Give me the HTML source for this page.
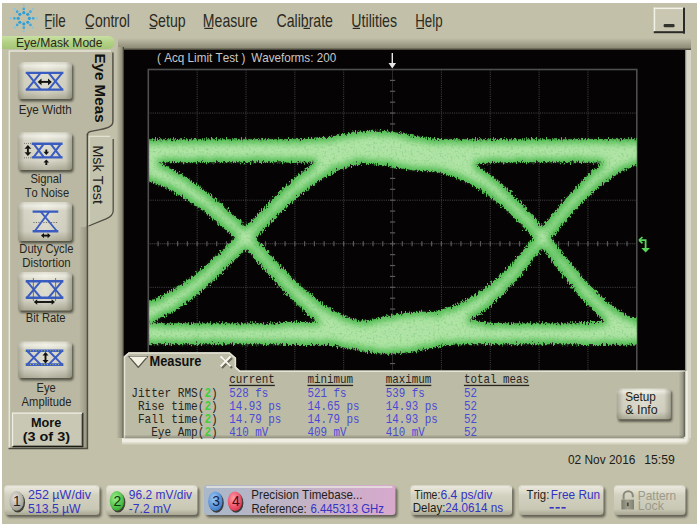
<!DOCTYPE html><html><head><meta charset="utf-8"><title>DCA Eye</title><style>html,body{margin:0;padding:0;background:#fff;width:700px;height:528px;overflow:hidden}svg{display:block}#w{width:700px;height:528px}text{font-kerning:none}</style></head><body><div id="w"><svg width="700" height="528" viewBox="0 0 700 528"><defs><linearGradient id="gTopSh" x1="0" y1="0" x2="0" y2="1"><stop offset="0" stop-color="#c2c0a9"/><stop offset="0.8" stop-color="#8f8c78"/><stop offset="1" stop-color="#3a392f"/></linearGradient><linearGradient id="gLeftSh" x1="0" y1="0" x2="1" y2="0"><stop offset="0" stop-color="#c2c0a9"/><stop offset="0.75" stop-color="#918e7b"/><stop offset="1" stop-color="#2e2d26"/></linearGradient><linearGradient id="gRtHl" x1="0" y1="0" x2="1" y2="0"><stop offset="0" stop-color="#2a2a24"/><stop offset="0.45" stop-color="#d8d8cc"/><stop offset="1" stop-color="#d8d7c8"/></linearGradient><linearGradient id="gBtHl" x1="0" y1="0" x2="0" y2="1"><stop offset="0" stop-color="#f1f0e5"/><stop offset="0.45" stop-color="#eeede2"/><stop offset="1" stop-color="#c2c0a9"/></linearGradient><radialGradient id="gCorn" cx="683.5" cy="438.3" r="7.5" gradientUnits="userSpaceOnUse"><stop offset="0" stop-color="#f1f0e5"/><stop offset="0.5" stop-color="#e6e5d9"/><stop offset="1" stop-color="#c2c0a9"/></radialGradient><clipPath id="cGrid"><rect x="149.10" y="69.50" width="487.70" height="348.50"/></clipPath><filter id="fEye" x="-2%" y="-5%" width="104%" height="110%" color-interpolation-filters="sRGB"><feTurbulence type="fractalNoise" baseFrequency="0.8 0.3" numOctaves="2" seed="5" result="n"/><feDisplacementMap in="SourceGraphic" in2="n" scale="8" xChannelSelector="R" yChannelSelector="G" result="d"/><feFlood flood-color="#4ebc50"/><feComposite in2="d" operator="in" result="base"/><feMorphology in="d" operator="erode" radius="3" result="er"/><feGaussianBlur in="er" stdDeviation="3.2" result="core"/><feFlood flood-color="#b0e4a6"/><feComposite in2="core" operator="in" result="coreC"/><feTurbulence type="fractalNoise" baseFrequency="0.45" numOctaves="2" seed="9" result="n2"/><feColorMatrix in="n2" type="matrix" values="0 0 0 0 0.36  0 0 0 0 0.72  0 0 0 0 0.34  0 0 0 -1.1 0.55" result="spk"/><feComposite in="spk" in2="d" operator="in" result="spkIn"/><feMerge result="m"><feMergeNode in="base"/><feMergeNode in="coreC"/><feMergeNode in="spkIn"/></feMerge><feGaussianBlur in="m" stdDeviation="0.7"/></filter><linearGradient id="gMpR" x1="0" y1="0" x2="1" y2="0"><stop offset="0" stop-color="#5a594d" stop-opacity="0"/><stop offset="0.6" stop-color="#5a594d" stop-opacity="0.35"/><stop offset="1" stop-color="#4a4940" stop-opacity="0.95"/></linearGradient><linearGradient id="gMpB" x1="0" y1="0" x2="0" y2="1"><stop offset="0" stop-color="#5a594d" stop-opacity="0"/><stop offset="1" stop-color="#5a594d" stop-opacity="0.45"/></linearGradient><filter id="fSh" x="-20%" y="-20%" width="140%" height="140%"><feGaussianBlur stdDeviation="1.3"/></filter><linearGradient id="gBtn" x1="0" y1="0" x2="0" y2="1"><stop offset="0" stop-color="#e8e7da"/><stop offset="0.12" stop-color="#d6d5c4"/><stop offset="1" stop-color="#c2c1ad"/></linearGradient><linearGradient id="gMode" x1="0" y1="0" x2="0" y2="1"><stop offset="0" stop-color="#c9e0a4"/><stop offset="0.5" stop-color="#b2d185"/><stop offset="1" stop-color="#a4c576"/></linearGradient><linearGradient id="gPanR" x1="0" y1="0" x2="1" y2="0"><stop offset="0" stop-color="#6a6956" stop-opacity="0"/><stop offset="1" stop-color="#6a6956" stop-opacity="0.45"/></linearGradient><linearGradient id="gIcoV" x1="0" y1="0" x2="0" y2="1"><stop offset="0" stop-color="#dcdbcc"/><stop offset="0.1" stop-color="#f3f2e8"/><stop offset="0.22" stop-color="#dddccd"/><stop offset="0.75" stop-color="#d6d5c6"/><stop offset="1" stop-color="#aeac98"/></linearGradient><linearGradient id="gIcoH" x1="0" y1="0" x2="1" y2="0"><stop offset="0" stop-color="#6e6d5a" stop-opacity="0.45"/><stop offset="0.12" stop-color="#6e6d5a" stop-opacity="0.08"/><stop offset="0.5" stop-color="#ffffff" stop-opacity="0.1"/><stop offset="0.88" stop-color="#6e6d5a" stop-opacity="0.08"/><stop offset="1" stop-color="#6e6d5a" stop-opacity="0.5"/></linearGradient><linearGradient id="gSt" x1="0" y1="0" x2="0" y2="1"><stop offset="0" stop-color="#d4d3c3"/><stop offset="0.12" stop-color="#e4e3d6"/><stop offset="0.35" stop-color="#d2d1c0"/><stop offset="0.8" stop-color="#c9c8b5"/><stop offset="1" stop-color="#a7a692"/></linearGradient><linearGradient id="gTb" x1="0" y1="0" x2="1" y2="0"><stop offset="0" stop-color="#a9b8c9"/><stop offset="0.5" stop-color="#c2b3c6"/><stop offset="1" stop-color="#d7a9cd"/></linearGradient><radialGradient id="gE1" cx="0.4" cy="0.35" r="0.7"><stop offset="0" stop-color="#e4e2dc"/><stop offset="1" stop-color="#9a978d"/></radialGradient><radialGradient id="gE2" cx="0.4" cy="0.35" r="0.7"><stop offset="0" stop-color="#9df08f"/><stop offset="1" stop-color="#2faa2c"/></radialGradient><radialGradient id="gE3" cx="0.4" cy="0.35" r="0.7"><stop offset="0" stop-color="#9cc8f4"/><stop offset="1" stop-color="#3a78c8"/></radialGradient><radialGradient id="gE4" cx="0.4" cy="0.35" r="0.7"><stop offset="0" stop-color="#ff9aa8"/><stop offset="1" stop-color="#e0304a"/></radialGradient><linearGradient id="gLk" x1="0" y1="0" x2="1" y2="0"><stop offset="0" stop-color="#7c7b6c"/><stop offset="0.5" stop-color="#a3a291"/><stop offset="1" stop-color="#808070"/></linearGradient></defs><g><rect x="0.00" y="0.00" width="700.00" height="528.00" fill="#ffffff" />
<rect x="2.00" y="3.00" width="695.00" height="521.00" fill="#c2c0a9" />
<circle cx="29.40" cy="18.30" r="1.60" fill="#2d9ed8"/>
<circle cx="33.20" cy="18.30" r="1.35" fill="#3aa8dc"/>
<circle cx="36.80" cy="18.30" r="1.00" fill="#7cc4e6"/>
<circle cx="27.76" cy="22.26" r="1.60" fill="#2d9ed8"/>
<circle cx="30.45" cy="24.95" r="1.35" fill="#3aa8dc"/>
<circle cx="32.99" cy="27.49" r="1.00" fill="#7cc4e6"/>
<circle cx="23.80" cy="23.90" r="1.60" fill="#2d9ed8"/>
<circle cx="23.80" cy="27.70" r="1.35" fill="#3aa8dc"/>
<circle cx="23.80" cy="31.30" r="1.00" fill="#7cc4e6"/>
<circle cx="19.84" cy="22.26" r="1.60" fill="#2d9ed8"/>
<circle cx="17.15" cy="24.95" r="1.35" fill="#3aa8dc"/>
<circle cx="14.61" cy="27.49" r="1.00" fill="#7cc4e6"/>
<circle cx="18.20" cy="18.30" r="1.60" fill="#2d9ed8"/>
<circle cx="14.40" cy="18.30" r="1.35" fill="#3aa8dc"/>
<circle cx="10.80" cy="18.30" r="1.00" fill="#7cc4e6"/>
<circle cx="19.84" cy="14.34" r="1.60" fill="#2d9ed8"/>
<circle cx="17.15" cy="11.65" r="1.35" fill="#3aa8dc"/>
<circle cx="14.61" cy="9.11" r="1.00" fill="#7cc4e6"/>
<circle cx="23.80" cy="12.70" r="1.60" fill="#2d9ed8"/>
<circle cx="23.80" cy="8.90" r="1.35" fill="#3aa8dc"/>
<circle cx="23.80" cy="5.30" r="1.00" fill="#7cc4e6"/>
<circle cx="27.76" cy="14.34" r="1.60" fill="#2d9ed8"/>
<circle cx="30.45" cy="11.65" r="1.35" fill="#3aa8dc"/>
<circle cx="32.99" cy="9.11" r="1.00" fill="#7cc4e6"/>
<text x="44.13" y="26.60" font-family="Liberation Sans" font-weight="normal" font-size="17.97" textLength="21.59" lengthAdjust="spacingAndGlyphs" fill="#2a2a22" >File</text>
<text x="84.80" y="26.60" font-family="Liberation Sans" font-weight="normal" font-size="17.97" textLength="45.06" lengthAdjust="spacingAndGlyphs" fill="#2a2a22" >Control</text>
<text x="148.66" y="26.60" font-family="Liberation Sans" font-weight="normal" font-size="17.97" textLength="36.95" lengthAdjust="spacingAndGlyphs" fill="#2a2a22" >Setup</text>
<text x="202.87" y="26.60" font-family="Liberation Sans" font-weight="normal" font-size="17.97" textLength="54.77" lengthAdjust="spacingAndGlyphs" fill="#2a2a22" >Measure</text>
<text x="276.49" y="26.60" font-family="Liberation Sans" font-weight="normal" font-size="17.97" textLength="56.47" lengthAdjust="spacingAndGlyphs" fill="#2a2a22" >Calibrate</text>
<text x="351.34" y="26.60" font-family="Liberation Sans" font-weight="normal" font-size="17.97" textLength="45.73" lengthAdjust="spacingAndGlyphs" fill="#2a2a22" >Utilities</text>
<text x="415.24" y="26.60" font-family="Liberation Sans" font-weight="normal" font-size="17.97" textLength="27.32" lengthAdjust="spacingAndGlyphs" fill="#2a2a22" >Help</text>
<rect x="45.50" y="27.80" width="6.00" height="1.20" fill="#2a2a22" />
<rect x="85.80" y="27.80" width="7.70" height="1.20" fill="#2a2a22" />
<rect x="149.50" y="27.80" width="6.50" height="1.20" fill="#2a2a22" />
<rect x="204.30" y="27.80" width="8.70" height="1.20" fill="#2a2a22" />
<rect x="303.50" y="27.80" width="6.50" height="1.20" fill="#2a2a22" />
<rect x="352.70" y="27.80" width="7.30" height="1.20" fill="#2a2a22" />
<rect x="416.50" y="27.80" width="7.50" height="1.20" fill="#2a2a22" />
<rect x="653.70" y="7.60" width="31.30" height="25.40" fill="#c9c7b2" />
<rect x="653.70" y="7.60" width="31.30" height="1.50" fill="#f2f1e6" />
<rect x="653.70" y="7.60" width="1.50" height="25.40" fill="#f2f1e6" />
<rect x="683.00" y="7.60" width="2.00" height="26.00" fill="#2a2a26" />
<rect x="653.70" y="31.20" width="31.30" height="2.00" fill="#2a2a26" />
<rect x="663.60" y="24.00" width="11.00" height="3.20" fill="#33332d"  rx="1.2"/>
<rect x="118.00" y="38.00" width="573.00" height="12.00" fill="url(#gTopSh)" />
<rect x="116.30" y="47.00" width="7.70" height="391.00" fill="url(#gLeftSh)" />
<rect x="683.50" y="50.00" width="7.50" height="388.30" fill="url(#gRtHl)" />
<rect x="122.00" y="438.30" width="561.50" height="7.00" fill="url(#gBtHl)" />
<path d="M683.5,438.3 L691,438.3 A7.5,7.5 0 0 1 683.5,445.8 Z" fill="url(#gCorn)"/>
<rect x="124.00" y="50.00" width="561.00" height="388.00" fill="#050303" />
<g stroke="#4a4a4a" stroke-width="1" stroke-dasharray="1 1.2"><line x1="197.15" y1="69.50" x2="197.15" y2="418.00"/><line x1="246.00" y1="69.50" x2="246.00" y2="418.00"/><line x1="294.85" y1="69.50" x2="294.85" y2="418.00"/><line x1="343.70" y1="69.50" x2="343.70" y2="418.00"/><line x1="441.40" y1="69.50" x2="441.40" y2="418.00"/><line x1="490.25" y1="69.50" x2="490.25" y2="418.00"/><line x1="539.10" y1="69.50" x2="539.10" y2="418.00"/><line x1="587.95" y1="69.50" x2="587.95" y2="418.00"/><line x1="148.30" y1="113.06" x2="636.80" y2="113.06"/><line x1="148.30" y1="156.62" x2="636.80" y2="156.62"/><line x1="148.30" y1="200.19" x2="636.80" y2="200.19"/><line x1="148.30" y1="287.31" x2="636.80" y2="287.31"/><line x1="148.30" y1="330.88" x2="636.80" y2="330.88"/><line x1="148.30" y1="374.44" x2="636.80" y2="374.44"/></g>
<g stroke="#555" stroke-width="1" stroke-dasharray="1 1"><line x1="392.55" y1="69.50" x2="392.55" y2="418.00"/><line x1="148.30" y1="243.75" x2="636.80" y2="243.75"/></g>
<g stroke="#5a5a5a" stroke-width="1.2"><line x1="158.07" y1="241.15" x2="158.07" y2="246.35"/><line x1="167.84" y1="241.15" x2="167.84" y2="246.35"/><line x1="177.61" y1="241.15" x2="177.61" y2="246.35"/><line x1="187.38" y1="241.15" x2="187.38" y2="246.35"/><line x1="197.15" y1="241.15" x2="197.15" y2="246.35"/><line x1="206.92" y1="241.15" x2="206.92" y2="246.35"/><line x1="216.69" y1="241.15" x2="216.69" y2="246.35"/><line x1="226.46" y1="241.15" x2="226.46" y2="246.35"/><line x1="236.23" y1="241.15" x2="236.23" y2="246.35"/><line x1="246.00" y1="241.15" x2="246.00" y2="246.35"/><line x1="255.77" y1="241.15" x2="255.77" y2="246.35"/><line x1="265.54" y1="241.15" x2="265.54" y2="246.35"/><line x1="275.31" y1="241.15" x2="275.31" y2="246.35"/><line x1="285.08" y1="241.15" x2="285.08" y2="246.35"/><line x1="294.85" y1="241.15" x2="294.85" y2="246.35"/><line x1="304.62" y1="241.15" x2="304.62" y2="246.35"/><line x1="314.39" y1="241.15" x2="314.39" y2="246.35"/><line x1="324.16" y1="241.15" x2="324.16" y2="246.35"/><line x1="333.93" y1="241.15" x2="333.93" y2="246.35"/><line x1="343.70" y1="241.15" x2="343.70" y2="246.35"/><line x1="353.47" y1="241.15" x2="353.47" y2="246.35"/><line x1="363.24" y1="241.15" x2="363.24" y2="246.35"/><line x1="373.01" y1="241.15" x2="373.01" y2="246.35"/><line x1="382.78" y1="241.15" x2="382.78" y2="246.35"/><line x1="392.55" y1="241.15" x2="392.55" y2="246.35"/><line x1="402.32" y1="241.15" x2="402.32" y2="246.35"/><line x1="412.09" y1="241.15" x2="412.09" y2="246.35"/><line x1="421.86" y1="241.15" x2="421.86" y2="246.35"/><line x1="431.63" y1="241.15" x2="431.63" y2="246.35"/><line x1="441.40" y1="241.15" x2="441.40" y2="246.35"/><line x1="451.17" y1="241.15" x2="451.17" y2="246.35"/><line x1="460.94" y1="241.15" x2="460.94" y2="246.35"/><line x1="470.71" y1="241.15" x2="470.71" y2="246.35"/><line x1="480.48" y1="241.15" x2="480.48" y2="246.35"/><line x1="490.25" y1="241.15" x2="490.25" y2="246.35"/><line x1="500.02" y1="241.15" x2="500.02" y2="246.35"/><line x1="509.79" y1="241.15" x2="509.79" y2="246.35"/><line x1="519.56" y1="241.15" x2="519.56" y2="246.35"/><line x1="529.33" y1="241.15" x2="529.33" y2="246.35"/><line x1="539.10" y1="241.15" x2="539.10" y2="246.35"/><line x1="548.87" y1="241.15" x2="548.87" y2="246.35"/><line x1="558.64" y1="241.15" x2="558.64" y2="246.35"/><line x1="568.41" y1="241.15" x2="568.41" y2="246.35"/><line x1="578.18" y1="241.15" x2="578.18" y2="246.35"/><line x1="587.95" y1="241.15" x2="587.95" y2="246.35"/><line x1="597.72" y1="241.15" x2="597.72" y2="246.35"/><line x1="607.49" y1="241.15" x2="607.49" y2="246.35"/><line x1="617.26" y1="241.15" x2="617.26" y2="246.35"/><line x1="627.03" y1="241.15" x2="627.03" y2="246.35"/><line x1="389.95" y1="80.39" x2="395.15" y2="80.39"/><line x1="389.95" y1="91.28" x2="395.15" y2="91.28"/><line x1="389.95" y1="102.17" x2="395.15" y2="102.17"/><line x1="389.95" y1="113.06" x2="395.15" y2="113.06"/><line x1="389.95" y1="123.95" x2="395.15" y2="123.95"/><line x1="389.95" y1="134.84" x2="395.15" y2="134.84"/><line x1="389.95" y1="145.73" x2="395.15" y2="145.73"/><line x1="389.95" y1="156.62" x2="395.15" y2="156.62"/><line x1="389.95" y1="167.52" x2="395.15" y2="167.52"/><line x1="389.95" y1="178.41" x2="395.15" y2="178.41"/><line x1="389.95" y1="189.30" x2="395.15" y2="189.30"/><line x1="389.95" y1="200.19" x2="395.15" y2="200.19"/><line x1="389.95" y1="211.08" x2="395.15" y2="211.08"/><line x1="389.95" y1="221.97" x2="395.15" y2="221.97"/><line x1="389.95" y1="232.86" x2="395.15" y2="232.86"/><line x1="389.95" y1="243.75" x2="395.15" y2="243.75"/><line x1="389.95" y1="254.64" x2="395.15" y2="254.64"/><line x1="389.95" y1="265.53" x2="395.15" y2="265.53"/><line x1="389.95" y1="276.42" x2="395.15" y2="276.42"/><line x1="389.95" y1="287.31" x2="395.15" y2="287.31"/><line x1="389.95" y1="298.20" x2="395.15" y2="298.20"/><line x1="389.95" y1="309.09" x2="395.15" y2="309.09"/><line x1="389.95" y1="319.98" x2="395.15" y2="319.98"/><line x1="389.95" y1="330.88" x2="395.15" y2="330.88"/><line x1="389.95" y1="341.77" x2="395.15" y2="341.77"/><line x1="389.95" y1="352.66" x2="395.15" y2="352.66"/><line x1="389.95" y1="363.55" x2="395.15" y2="363.55"/><line x1="389.95" y1="374.44" x2="395.15" y2="374.44"/><line x1="389.95" y1="385.33" x2="395.15" y2="385.33"/><line x1="389.95" y1="396.22" x2="395.15" y2="396.22"/><line x1="389.95" y1="407.11" x2="395.15" y2="407.11"/></g>
<rect x="148.30" y="69.50" width="488.50" height="348.50" fill="none" stroke="#4e4e4e" stroke-width="1.6"/>
<text x="157.08" y="62.00" font-family="Liberation Sans" font-weight="normal" font-size="13.33" textLength="88.37" lengthAdjust="spacingAndGlyphs" fill="#c8c8c8" xml:space="preserve">( Acq Limit Test )</text>
<text x="251.14" y="62.00" font-family="Liberation Sans" font-weight="normal" font-size="13.33" textLength="85.01" lengthAdjust="spacingAndGlyphs" fill="#c8c8c8" >Waveforms: 200</text>
<line x1="392.3" y1="53" x2="392.3" y2="65" stroke="#e6e6e6" stroke-width="1.4"/>
<path d="M388.5,63 L396.1,63 L392.3,68.5 Z" fill="#e6e6e6"/>
<g clip-path="url(#cGrid)"><g filter="url(#fEye)" fill="#000"><g transform="translate(0.8,1.5)"><path d="M140.0,137.7 L160.0,137.7 L180.0,137.7 L200.0,137.7 L220.0,137.7 L240.0,137.7 L260.0,137.7 L280.0,137.7 L300.0,137.7 L320.0,137.7 L340.0,137.7 L360.0,137.7 L380.0,137.7 L400.0,137.7 L420.0,137.7 L440.0,137.7 L460.0,137.7 L480.0,137.7 L500.0,137.7 L520.0,137.7 L540.0,137.7 L560.0,137.7 L580.0,137.7 L600.0,137.7 L620.0,137.7 L640.0,137.7 L645.0,137.7 L645.0,160.7 L640.0,160.7 L620.0,160.7 L600.0,160.7 L580.0,160.7 L560.0,160.7 L540.0,160.7 L520.0,160.7 L500.0,160.7 L480.0,160.7 L460.0,160.7 L440.0,160.7 L420.0,160.7 L400.0,160.7 L380.0,160.7 L360.0,160.7 L340.0,160.7 L320.0,160.7 L300.0,160.7 L280.0,160.7 L260.0,160.7 L240.0,160.7 L220.0,160.7 L200.0,160.7 L180.0,160.7 L160.0,160.7 L140.0,160.7 Z"/><path d="M140.0,321.8 L160.0,321.8 L180.0,321.8 L200.0,321.8 L220.0,321.8 L240.0,321.8 L260.0,321.8 L280.0,321.8 L300.0,321.8 L320.0,321.8 L340.0,321.8 L360.0,321.8 L380.0,321.8 L400.0,321.8 L420.0,321.8 L440.0,321.8 L460.0,321.8 L480.0,321.8 L500.0,321.8 L520.0,321.8 L540.0,321.8 L560.0,321.8 L580.0,321.8 L600.0,321.8 L620.0,321.8 L640.0,321.8 L645.0,321.8 L645.0,342.8 L640.0,342.8 L620.0,342.8 L600.0,342.8 L580.0,342.8 L560.0,342.8 L540.0,342.8 L520.0,342.8 L500.0,342.8 L480.0,342.8 L460.0,342.8 L440.0,342.8 L420.0,342.8 L400.0,342.8 L380.0,342.8 L360.0,342.8 L340.0,342.8 L320.0,342.8 L300.0,342.8 L280.0,342.8 L260.0,342.8 L240.0,342.8 L220.0,342.8 L200.0,342.8 L180.0,342.8 L160.0,342.8 L140.0,342.8 Z"/><path d="M140.0,154.4 L142.0,155.1 L144.0,155.8 L146.0,156.5 L148.0,157.2 L150.0,158.0 L152.0,158.8 L154.0,159.6 L156.0,160.4 L158.0,161.3 L160.0,162.1 L162.0,163.1 L164.0,164.0 L166.0,165.0 L168.0,166.0 L170.0,167.0 L172.0,168.0 L174.0,169.1 L176.0,170.3 L178.0,171.4 L180.0,172.6 L182.0,173.8 L184.0,175.0 L186.0,176.3 L188.0,177.6 L190.0,178.9 L192.0,180.3 L194.0,181.7 L196.0,183.1 L198.0,184.5 L200.0,186.0 L202.0,187.5 L204.0,189.0 L206.0,190.6 L208.0,192.2 L210.0,193.8 L212.0,195.4 L214.0,197.1 L216.0,198.8 L218.0,200.5 L220.0,202.2 L222.0,204.0 L224.0,205.7 L226.0,207.5 L228.0,209.3 L230.0,211.1 L232.0,212.9 L234.0,214.8 L236.0,216.6 L238.0,218.5 L240.0,220.3 L242.0,222.2 L244.0,224.1 L246.0,226.2 L248.0,228.5 L250.0,230.8 L252.0,233.1 L254.0,235.5 L256.0,237.8 L258.0,240.1 L260.0,242.4 L262.0,244.6 L264.0,246.9 L266.0,249.2 L268.0,251.4 L270.0,253.6 L272.0,255.9 L274.0,258.1 L276.0,260.2 L278.0,262.4 L280.0,264.5 L282.0,266.6 L284.0,268.7 L286.0,270.8 L288.0,272.8 L290.0,274.8 L292.0,276.8 L294.0,278.7 L296.0,280.7 L298.0,282.5 L300.0,284.4 L302.0,286.2 L304.0,288.0 L306.0,289.7 L308.0,291.4 L310.0,293.1 L312.0,294.7 L314.0,296.3 L316.0,297.8 L318.0,299.3 L320.0,300.8 L322.0,302.2 L324.0,303.6 L326.0,304.9 L328.0,306.2 L330.0,307.4 L332.0,308.6 L334.0,309.7 L336.0,310.8 L338.0,311.8 L340.0,312.7 L342.0,313.7 L344.0,314.5 L346.0,315.3 L348.0,316.1 L350.0,316.8 L352.0,317.4 L354.0,318.0 L356.0,318.5 L358.0,319.0 L360.0,319.4 L362.0,319.7 L364.0,320.0 L366.0,320.3 L368.0,320.5 L370.0,320.6 L372.0,320.7 L374.0,320.8 L376.0,320.8 L378.0,320.8 L379.0,320.8 L379.0,343.8 L378.0,343.8 L376.0,343.8 L374.0,343.8 L372.0,343.7 L370.0,343.6 L368.0,343.4 L366.0,343.2 L364.0,342.9 L362.0,342.5 L360.0,342.1 L358.0,341.6 L356.0,341.1 L354.0,340.5 L352.0,339.8 L350.0,339.1 L348.0,338.4 L346.0,337.6 L344.0,336.7 L342.0,335.8 L340.0,334.9 L338.0,333.9 L336.0,332.9 L334.0,331.8 L332.0,330.6 L330.0,329.4 L328.0,328.2 L326.0,326.9 L324.0,325.6 L322.0,324.2 L320.0,322.8 L318.0,321.4 L316.0,319.9 L314.0,318.3 L312.0,316.7 L310.0,315.1 L308.0,313.4 L306.0,311.7 L304.0,310.0 L302.0,308.2 L300.0,306.4 L298.0,304.5 L296.0,302.7 L294.0,300.7 L292.0,298.8 L290.0,296.8 L288.0,294.8 L286.0,292.8 L284.0,290.7 L282.0,288.6 L280.0,286.5 L278.0,284.4 L276.0,282.2 L274.0,280.1 L272.0,277.9 L270.0,275.6 L268.0,273.4 L266.0,271.2 L264.0,268.9 L262.0,266.6 L260.0,264.4 L258.0,262.1 L256.0,259.8 L254.0,257.5 L252.0,255.1 L250.0,252.8 L248.0,250.5 L246.0,248.2 L244.0,246.1 L242.0,244.2 L240.0,242.3 L238.0,240.5 L236.0,238.6 L234.0,236.8 L232.0,234.9 L230.0,233.1 L228.0,231.3 L226.0,229.5 L224.0,227.7 L222.0,226.0 L220.0,224.2 L218.0,222.5 L216.0,220.8 L214.0,219.1 L212.0,217.4 L210.0,215.8 L208.0,214.2 L206.0,212.6 L204.0,211.0 L202.0,209.5 L200.0,208.0 L198.0,206.5 L196.0,205.1 L194.0,203.7 L192.0,202.3 L190.0,200.9 L188.0,199.6 L186.0,198.3 L184.0,197.1 L182.0,195.8 L180.0,194.6 L178.0,193.5 L176.0,192.3 L174.0,191.2 L172.0,190.1 L170.0,189.1 L168.0,188.1 L166.0,187.1 L164.0,186.2 L162.0,185.2 L160.0,184.3 L158.0,183.5 L156.0,182.6 L154.0,181.8 L152.0,181.0 L150.0,180.3 L148.0,179.5 L146.0,178.8 L144.0,178.1 L142.0,177.5 L140.0,176.8 Z"/><path d="M140.0,302.9 L142.0,302.2 L144.0,301.4 L146.0,300.7 L148.0,299.9 L150.0,299.1 L152.0,298.2 L154.0,297.4 L156.0,296.5 L158.0,295.5 L160.0,294.6 L162.0,293.6 L164.0,292.5 L166.0,291.5 L168.0,290.4 L170.0,289.3 L172.0,288.1 L174.0,286.9 L176.0,285.7 L178.0,284.4 L180.0,283.1 L182.0,281.8 L184.0,280.4 L186.0,279.0 L188.0,277.6 L190.0,276.1 L192.0,274.6 L194.0,273.1 L196.0,271.5 L198.0,269.9 L200.0,268.3 L202.0,266.6 L204.0,264.9 L206.0,263.2 L208.0,261.4 L210.0,259.6 L212.0,257.8 L214.0,256.0 L216.0,254.1 L218.0,252.2 L220.0,250.3 L222.0,248.3 L224.0,246.4 L226.0,244.4 L228.0,242.4 L230.0,240.4 L232.0,238.4 L234.0,236.3 L236.0,234.3 L238.0,232.2 L240.0,230.2 L242.0,228.1 L244.0,226.0 L246.0,224.0 L248.0,221.9 L250.0,219.8 L252.0,217.7 L254.0,215.6 L256.0,213.5 L258.0,211.4 L260.0,209.4 L262.0,207.3 L264.0,205.2 L266.0,203.2 L268.0,201.2 L270.0,199.2 L272.0,197.2 L274.0,195.2 L276.0,193.2 L278.0,191.3 L280.0,189.4 L282.0,187.5 L284.0,185.6 L286.0,183.7 L288.0,181.9 L290.0,180.1 L292.0,178.3 L294.0,176.6 L296.0,174.8 L298.0,173.1 L300.0,171.5 L302.0,169.8 L304.0,168.2 L306.0,166.7 L308.0,165.1 L310.0,163.6 L312.0,162.2 L314.0,160.7 L316.0,159.3 L318.0,158.0 L320.0,156.7 L322.0,155.4 L324.0,154.1 L326.0,152.9 L328.0,151.8 L330.0,150.7 L332.0,149.6 L334.0,148.6 L336.0,147.6 L338.0,146.6 L340.0,145.7 L342.0,144.9 L344.0,144.1 L346.0,143.3 L348.0,142.6 L350.0,141.9 L352.0,141.3 L354.0,140.7 L356.0,140.2 L358.0,139.7 L360.0,139.2 L362.0,138.9 L364.0,138.5 L366.0,138.3 L368.0,138.0 L370.0,137.9 L372.0,137.8 L374.0,137.7 L376.0,137.7 L378.0,137.7 L379.0,137.7 L379.0,160.7 L378.0,160.7 L376.0,160.7 L374.0,160.7 L372.0,160.8 L370.0,160.8 L368.0,161.0 L366.0,161.2 L364.0,161.4 L362.0,161.7 L360.0,162.0 L358.0,162.4 L356.0,162.8 L354.0,163.3 L352.0,163.8 L350.0,164.4 L348.0,165.0 L346.0,165.6 L344.0,166.4 L342.0,167.1 L340.0,168.0 L338.0,168.8 L336.0,169.7 L334.0,170.7 L332.0,171.7 L330.0,172.8 L328.0,173.9 L326.0,175.0 L324.0,176.2 L322.0,177.4 L320.0,178.7 L318.0,180.0 L316.0,181.3 L314.0,182.7 L312.0,184.2 L310.0,185.6 L308.0,187.1 L306.0,188.7 L304.0,190.2 L302.0,191.8 L300.0,193.5 L298.0,195.1 L296.0,196.8 L294.0,198.6 L292.0,200.3 L290.0,202.1 L288.0,203.9 L286.0,205.7 L284.0,207.6 L282.0,209.5 L280.0,211.4 L278.0,213.3 L276.0,215.2 L274.0,217.2 L272.0,219.2 L270.0,221.2 L268.0,223.2 L266.0,225.2 L264.0,227.2 L262.0,229.3 L260.0,231.4 L258.0,233.4 L256.0,235.5 L254.0,237.6 L252.0,239.7 L250.0,241.8 L248.0,243.9 L246.0,246.0 L244.0,248.0 L242.0,250.1 L240.0,252.2 L238.0,254.2 L236.0,256.3 L234.0,258.3 L232.0,260.4 L230.0,262.4 L228.0,264.4 L226.0,266.4 L224.0,268.4 L222.0,270.3 L220.0,272.3 L218.0,274.2 L216.0,276.1 L214.0,278.0 L212.0,279.8 L210.0,281.6 L208.0,283.4 L206.0,285.2 L204.0,286.9 L202.0,288.6 L200.0,290.3 L198.0,291.9 L196.0,293.5 L194.0,295.1 L192.0,296.6 L190.0,298.1 L188.0,299.6 L186.0,301.0 L184.0,302.4 L182.0,303.8 L180.0,305.1 L178.0,306.5 L176.0,307.7 L174.0,309.0 L172.0,310.2 L170.0,311.3 L168.0,312.5 L166.0,313.6 L164.0,314.6 L162.0,315.7 L160.0,316.7 L158.0,317.7 L156.0,318.6 L154.0,319.6 L152.0,320.4 L150.0,321.3 L148.0,322.2 L146.0,323.0 L144.0,323.8 L142.0,324.5 L140.0,325.2 Z"/><path d="M281.5,137.9 L283.5,137.9 L285.5,137.9 L287.5,137.9 L289.5,137.9 L291.5,137.9 L293.5,138.0 L295.5,138.0 L297.5,138.0 L299.5,138.0 L301.5,138.0 L303.5,138.0 L305.5,138.0 L307.5,138.1 L309.5,138.1 L311.5,138.1 L313.5,138.1 L315.5,138.2 L317.5,138.2 L319.5,138.2 L321.5,138.2 L323.5,138.3 L325.5,138.3 L327.5,138.3 L329.5,138.4 L331.5,138.4 L333.5,138.4 L335.5,138.5 L337.5,138.5 L339.5,138.6 L341.5,138.6 L343.5,138.6 L345.5,138.7 L347.5,138.7 L349.5,138.8 L351.5,138.9 L353.5,138.9 L355.5,139.0 L357.5,139.1 L359.5,139.1 L361.5,139.2 L363.5,139.3 L365.5,139.4 L367.5,139.5 L369.5,139.6 L371.5,139.7 L373.5,139.8 L375.5,139.9 L377.5,140.0 L379.5,140.1 L381.5,140.3 L383.5,140.4 L385.5,140.5 L387.5,140.7 L389.5,140.8 L391.5,141.0 L393.5,141.2 L395.5,141.4 L397.5,141.6 L399.5,141.8 L401.5,142.0 L403.5,142.2 L405.5,142.5 L407.5,142.7 L409.5,143.0 L411.5,143.3 L413.5,143.6 L415.5,143.9 L417.5,144.2 L419.5,144.5 L421.5,144.9 L423.5,145.3 L425.5,145.7 L427.5,146.1 L429.5,146.5 L431.5,147.0 L433.5,147.4 L435.5,147.9 L437.5,148.5 L439.5,149.0 L441.5,149.6 L443.5,150.2 L445.5,150.8 L447.5,151.5 L449.5,152.2 L451.5,152.9 L453.5,153.6 L455.5,154.4 L457.5,155.2 L459.5,156.1 L461.5,156.9 L463.5,157.9 L465.5,158.8 L467.5,159.8 L469.5,160.8 L471.5,161.9 L473.5,163.0 L475.5,164.2 L477.5,165.3 L479.5,166.6 L481.5,167.9 L483.5,169.2 L485.5,170.5 L487.5,172.0 L489.5,173.4 L491.5,174.9 L493.5,176.5 L495.5,178.1 L497.5,179.7 L499.5,181.4 L501.5,183.1 L503.5,184.9 L505.5,186.7 L507.5,188.6 L509.5,190.5 L511.5,192.4 L513.5,194.4 L515.5,196.4 L517.5,198.5 L519.5,200.6 L521.5,202.7 L523.5,204.8 L525.5,207.0 L527.5,209.2 L529.5,211.4 L531.5,213.6 L533.5,215.9 L535.5,218.2 L537.5,220.4 L539.5,222.7 L541.5,225.0 L543.5,227.7 L545.5,230.3 L547.5,233.0 L549.5,235.6 L551.5,238.2 L553.5,240.9 L555.5,243.5 L557.5,246.1 L559.5,248.6 L561.5,251.2 L563.5,253.7 L565.5,256.3 L567.5,258.8 L569.5,261.2 L571.5,263.7 L573.5,266.1 L575.5,268.5 L577.5,270.8 L579.5,273.1 L581.5,275.4 L583.5,277.7 L585.5,279.9 L587.5,282.0 L589.5,284.1 L591.5,286.2 L593.5,288.2 L595.5,290.2 L597.5,292.1 L599.5,294.0 L601.5,295.8 L603.5,297.6 L605.5,299.3 L607.5,301.0 L609.5,302.6 L611.5,304.1 L613.5,305.6 L615.5,307.0 L617.5,308.4 L619.5,309.7 L621.5,310.9 L623.5,312.1 L625.5,313.1 L627.5,314.2 L629.5,315.1 L631.5,316.0 L633.5,316.8 L635.5,317.5 L637.5,318.1 L639.5,318.7 L641.5,319.2 L643.5,319.6 L645.0,319.9 L645.0,342.7 L643.5,342.3 L641.5,341.8 L639.5,341.2 L637.5,340.6 L635.5,339.8 L633.5,339.0 L631.5,338.2 L629.5,337.3 L627.5,336.3 L625.5,335.2 L623.5,334.1 L621.5,333.0 L619.5,331.7 L617.5,330.4 L615.5,329.0 L613.5,327.6 L611.5,326.1 L609.5,324.6 L607.5,323.0 L605.5,321.3 L603.5,319.6 L601.5,317.9 L599.5,316.0 L597.5,314.1 L595.5,312.2 L593.5,310.2 L591.5,308.2 L589.5,306.1 L587.5,304.0 L585.5,301.9 L583.5,299.7 L581.5,297.4 L579.5,295.2 L577.5,292.8 L575.5,290.5 L573.5,288.1 L571.5,285.7 L569.5,283.2 L567.5,280.8 L565.5,278.3 L563.5,275.7 L561.5,273.2 L559.5,270.6 L557.5,268.1 L555.5,265.5 L553.5,262.9 L551.5,260.2 L549.5,257.6 L547.5,255.0 L545.5,252.3 L543.5,249.7 L541.5,247.0 L539.5,244.7 L537.5,242.4 L535.5,240.2 L533.5,237.9 L531.5,235.6 L529.5,233.4 L527.5,231.2 L525.5,229.0 L523.5,226.8 L521.5,224.7 L519.5,222.6 L517.5,220.5 L515.5,218.4 L513.5,216.4 L511.5,214.4 L509.5,212.5 L507.5,210.6 L505.5,208.7 L503.5,206.9 L501.5,205.1 L499.5,203.4 L497.5,201.7 L495.5,200.1 L493.5,198.5 L491.5,196.9 L489.5,195.4 L487.5,194.0 L485.5,192.6 L483.5,191.2 L481.5,189.9 L479.5,188.6 L477.5,187.4 L475.5,186.2 L473.5,185.1 L471.5,184.0 L469.5,182.9 L467.5,181.9 L465.5,181.0 L463.5,180.0 L461.5,179.2 L459.5,178.3 L457.5,177.5 L455.5,176.7 L453.5,176.0 L451.5,175.2 L449.5,174.6 L447.5,173.9 L445.5,173.3 L443.5,172.7 L441.5,172.1 L439.5,171.6 L437.5,171.0 L435.5,170.6 L433.5,170.1 L431.5,169.6 L429.5,169.2 L427.5,168.8 L425.5,168.4 L423.5,168.0 L421.5,167.7 L419.5,167.3 L417.5,167.0 L415.5,166.7 L413.5,166.4 L411.5,166.1 L409.5,165.9 L407.5,165.6 L405.5,165.4 L403.5,165.1 L401.5,164.9 L399.5,164.7 L397.5,164.5 L395.5,164.3 L393.5,164.1 L391.5,164.0 L389.5,163.8 L387.5,163.6 L385.5,163.5 L383.5,163.4 L381.5,163.2 L379.5,163.1 L377.5,163.0 L375.5,162.9 L373.5,162.8 L371.5,162.6 L369.5,162.5 L367.5,162.5 L365.5,162.4 L363.5,162.3 L361.5,162.2 L359.5,162.1 L357.5,162.1 L355.5,162.0 L353.5,161.9 L351.5,161.9 L349.5,161.8 L347.5,161.7 L345.5,161.7 L343.5,161.6 L341.5,161.6 L339.5,161.5 L337.5,161.5 L335.5,161.5 L333.5,161.4 L331.5,161.4 L329.5,161.4 L327.5,161.3 L325.5,161.3 L323.5,161.3 L321.5,161.2 L319.5,161.2 L317.5,161.2 L315.5,161.2 L313.5,161.1 L311.5,161.1 L309.5,161.1 L307.5,161.1 L305.5,161.0 L303.5,161.0 L301.5,161.0 L299.5,161.0 L297.5,161.0 L295.5,161.0 L293.5,161.0 L291.5,160.9 L289.5,160.9 L287.5,160.9 L285.5,160.9 L283.5,160.9 L281.5,160.9 Z"/><path d="M281.5,320.6 L283.5,320.6 L285.5,320.6 L287.5,320.6 L289.5,320.5 L291.5,320.5 L293.5,320.5 L295.5,320.5 L297.5,320.5 L299.5,320.5 L301.5,320.5 L303.5,320.4 L305.5,320.4 L307.5,320.4 L309.5,320.4 L311.5,320.3 L313.5,320.3 L315.5,320.3 L317.5,320.3 L319.5,320.2 L321.5,320.2 L323.5,320.2 L325.5,320.1 L327.5,320.1 L329.5,320.1 L331.5,320.0 L333.5,320.0 L335.5,320.0 L337.5,319.9 L339.5,319.9 L341.5,319.8 L343.5,319.8 L345.5,319.7 L347.5,319.6 L349.5,319.6 L351.5,319.5 L353.5,319.4 L355.5,319.4 L357.5,319.3 L359.5,319.2 L361.5,319.1 L363.5,319.0 L365.5,319.0 L367.5,318.9 L369.5,318.7 L371.5,318.6 L373.5,318.5 L375.5,318.4 L377.5,318.3 L379.5,318.1 L381.5,318.0 L383.5,317.9 L385.5,317.7 L387.5,317.5 L389.5,317.4 L391.5,317.2 L393.5,317.0 L395.5,316.8 L397.5,316.6 L399.5,316.4 L401.5,316.1 L403.5,315.9 L405.5,315.6 L407.5,315.4 L409.5,315.1 L411.5,314.8 L413.5,314.5 L415.5,314.2 L417.5,313.8 L419.5,313.5 L421.5,313.1 L423.5,312.7 L425.5,312.3 L427.5,311.8 L429.5,311.4 L431.5,310.9 L433.5,310.4 L435.5,309.9 L437.5,309.3 L439.5,308.8 L441.5,308.2 L443.5,307.5 L445.5,306.9 L447.5,306.2 L449.5,305.4 L451.5,304.7 L453.5,303.9 L455.5,303.0 L457.5,302.2 L459.5,301.3 L461.5,300.3 L463.5,299.3 L465.5,298.3 L467.5,297.2 L469.5,296.1 L471.5,294.9 L473.5,293.7 L475.5,292.4 L477.5,291.1 L479.5,289.8 L481.5,288.4 L483.5,286.9 L485.5,285.4 L487.5,283.8 L489.5,282.2 L491.5,280.6 L493.5,278.8 L495.5,277.1 L497.5,275.3 L499.5,273.4 L501.5,271.5 L503.5,269.5 L505.5,267.5 L507.5,265.4 L509.5,263.3 L511.5,261.2 L513.5,259.0 L515.5,256.7 L517.5,254.4 L519.5,252.1 L521.5,249.8 L523.5,247.4 L525.5,245.0 L527.5,242.5 L529.5,240.1 L531.5,237.6 L533.5,235.1 L535.5,232.6 L537.5,230.1 L539.5,227.5 L541.5,225.0 L543.5,222.6 L545.5,220.2 L547.5,217.8 L549.5,215.5 L551.5,213.1 L553.5,210.7 L555.5,208.4 L557.5,206.0 L559.5,203.7 L561.5,201.4 L563.5,199.1 L565.5,196.8 L567.5,194.6 L569.5,192.3 L571.5,190.1 L573.5,188.0 L575.5,185.8 L577.5,183.7 L579.5,181.6 L581.5,179.5 L583.5,177.5 L585.5,175.5 L587.5,173.6 L589.5,171.7 L591.5,169.8 L593.5,168.0 L595.5,166.2 L597.5,164.5 L599.5,162.8 L601.5,161.1 L603.5,159.5 L605.5,158.0 L607.5,156.5 L609.5,155.1 L611.5,153.7 L613.5,152.3 L615.5,151.0 L617.5,149.8 L619.5,148.6 L621.5,147.5 L623.5,146.4 L625.5,145.4 L627.5,144.5 L629.5,143.6 L631.5,142.8 L633.5,142.0 L635.5,141.3 L637.5,140.6 L639.5,140.0 L641.5,139.5 L643.5,139.0 L645.0,138.7 L645.0,161.5 L643.5,161.7 L641.5,162.1 L639.5,162.6 L637.5,163.1 L635.5,163.7 L633.5,164.3 L631.5,165.0 L629.5,165.8 L627.5,166.7 L625.5,167.6 L623.5,168.6 L621.5,169.6 L619.5,170.7 L617.5,171.9 L615.5,173.1 L613.5,174.3 L611.5,175.7 L609.5,177.1 L607.5,178.5 L605.5,180.0 L603.5,181.5 L601.5,183.1 L599.5,184.8 L597.5,186.5 L595.5,188.2 L593.5,190.0 L591.5,191.8 L589.5,193.7 L587.5,195.6 L585.5,197.5 L583.5,199.5 L581.5,201.5 L579.5,203.6 L577.5,205.7 L575.5,207.8 L573.5,210.0 L571.5,212.1 L569.5,214.3 L567.5,216.6 L565.5,218.8 L563.5,221.1 L561.5,223.4 L559.5,225.7 L557.5,228.0 L555.5,230.4 L553.5,232.7 L551.5,235.1 L549.5,237.5 L547.5,239.8 L545.5,242.2 L543.5,244.6 L541.5,247.0 L539.5,249.5 L537.5,252.1 L535.5,254.6 L533.5,257.1 L531.5,259.6 L529.5,262.1 L527.5,264.5 L525.5,267.0 L523.5,269.4 L521.5,271.8 L519.5,274.1 L517.5,276.4 L515.5,278.7 L513.5,281.0 L511.5,283.2 L509.5,285.3 L507.5,287.4 L505.5,289.5 L503.5,291.5 L501.5,293.5 L499.5,295.4 L497.5,297.3 L495.5,299.1 L493.5,300.8 L491.5,302.6 L489.5,304.2 L487.5,305.8 L485.5,307.4 L483.5,308.9 L481.5,310.4 L479.5,311.8 L477.5,313.2 L475.5,314.5 L473.5,315.8 L471.5,317.0 L469.5,318.2 L467.5,319.3 L465.5,320.4 L463.5,321.4 L461.5,322.5 L459.5,323.4 L457.5,324.4 L455.5,325.3 L453.5,326.1 L451.5,326.9 L449.5,327.7 L447.5,328.5 L445.5,329.2 L443.5,329.9 L441.5,330.6 L439.5,331.2 L437.5,331.8 L435.5,332.4 L433.5,333.0 L431.5,333.5 L429.5,334.0 L427.5,334.5 L425.5,335.0 L423.5,335.4 L421.5,335.8 L419.5,336.2 L417.5,336.6 L415.5,336.9 L413.5,337.3 L411.5,337.6 L409.5,337.9 L407.5,338.2 L405.5,338.5 L403.5,338.8 L401.5,339.0 L399.5,339.3 L397.5,339.5 L395.5,339.7 L393.5,339.9 L391.5,340.1 L389.5,340.3 L387.5,340.5 L385.5,340.7 L383.5,340.8 L381.5,341.0 L379.5,341.1 L377.5,341.2 L375.5,341.4 L373.5,341.5 L371.5,341.6 L369.5,341.7 L367.5,341.8 L365.5,341.9 L363.5,342.0 L361.5,342.1 L359.5,342.2 L357.5,342.3 L355.5,342.4 L353.5,342.4 L351.5,342.5 L349.5,342.6 L347.5,342.6 L345.5,342.7 L343.5,342.8 L341.5,342.8 L339.5,342.9 L337.5,342.9 L335.5,342.9 L333.5,343.0 L331.5,343.0 L329.5,343.1 L327.5,343.1 L325.5,343.1 L323.5,343.2 L321.5,343.2 L319.5,343.2 L317.5,343.3 L315.5,343.3 L313.5,343.3 L311.5,343.3 L309.5,343.4 L307.5,343.4 L305.5,343.4 L303.5,343.4 L301.5,343.5 L299.5,343.5 L297.5,343.5 L295.5,343.5 L293.5,343.5 L291.5,343.5 L289.5,343.5 L287.5,343.6 L285.5,343.6 L283.5,343.6 L281.5,343.6 Z"/><path d="M578.5,137.9 L580.5,137.9 L582.5,137.9 L584.5,137.9 L586.5,137.9 L588.5,137.9 L590.5,138.0 L592.5,138.0 L594.5,138.0 L596.5,138.0 L598.5,138.0 L600.5,138.0 L602.5,138.0 L604.5,138.1 L606.5,138.1 L608.5,138.1 L610.5,138.1 L612.5,138.2 L614.5,138.2 L616.5,138.2 L618.5,138.2 L620.5,138.3 L622.5,138.3 L624.5,138.3 L626.5,138.4 L628.5,138.4 L630.5,138.4 L632.5,138.5 L634.5,138.5 L636.5,138.6 L638.5,138.6 L640.5,138.6 L642.5,138.7 L644.5,138.7 L645.0,138.8 L645.0,161.8 L644.5,161.7 L642.5,161.7 L640.5,161.6 L638.5,161.6 L636.5,161.5 L634.5,161.5 L632.5,161.5 L630.5,161.4 L628.5,161.4 L626.5,161.4 L624.5,161.3 L622.5,161.3 L620.5,161.3 L618.5,161.2 L616.5,161.2 L614.5,161.2 L612.5,161.2 L610.5,161.1 L608.5,161.1 L606.5,161.1 L604.5,161.1 L602.5,161.0 L600.5,161.0 L598.5,161.0 L596.5,161.0 L594.5,161.0 L592.5,161.0 L590.5,161.0 L588.5,160.9 L586.5,160.9 L584.5,160.9 L582.5,160.9 L580.5,160.9 L578.5,160.9 Z"/><path d="M578.5,320.6 L580.5,320.6 L582.5,320.6 L584.5,320.6 L586.5,320.5 L588.5,320.5 L590.5,320.5 L592.5,320.5 L594.5,320.5 L596.5,320.5 L598.5,320.5 L600.5,320.4 L602.5,320.4 L604.5,320.4 L606.5,320.4 L608.5,320.3 L610.5,320.3 L612.5,320.3 L614.5,320.3 L616.5,320.2 L618.5,320.2 L620.5,320.2 L622.5,320.1 L624.5,320.1 L626.5,320.1 L628.5,320.0 L630.5,320.0 L632.5,320.0 L634.5,319.9 L636.5,319.9 L638.5,319.8 L640.5,319.8 L642.5,319.7 L644.5,319.6 L645.0,319.6 L645.0,342.6 L644.5,342.6 L642.5,342.7 L640.5,342.8 L638.5,342.8 L636.5,342.9 L634.5,342.9 L632.5,342.9 L630.5,343.0 L628.5,343.0 L626.5,343.1 L624.5,343.1 L622.5,343.1 L620.5,343.2 L618.5,343.2 L616.5,343.2 L614.5,343.3 L612.5,343.3 L610.5,343.3 L608.5,343.3 L606.5,343.4 L604.5,343.4 L602.5,343.4 L600.5,343.4 L598.5,343.5 L596.5,343.5 L594.5,343.5 L592.5,343.5 L590.5,343.5 L588.5,343.5 L586.5,343.5 L584.5,343.6 L582.5,343.6 L580.5,343.6 L578.5,343.6 Z"/><path d="M340.0,321.8 L342.0,321.8 L344.0,321.8 L346.0,321.7 L348.0,321.6 L350.0,321.4 L352.0,321.2 L354.0,321.0 L356.0,320.8 L358.0,320.5 L360.0,320.2 L362.0,319.9 L364.0,319.5 L366.0,319.1 L368.0,318.7 L370.0,318.3 L372.0,317.9 L374.0,317.5 L376.0,317.0 L378.0,316.6 L380.0,316.1 L382.0,315.7 L384.0,315.2 L386.0,314.8 L388.0,314.3 L390.0,313.9 L392.0,313.5 L394.0,313.1 L396.0,312.7 L398.0,312.4 L400.0,312.0 L402.0,311.7 L404.0,311.5 L406.0,311.2 L408.0,311.0 L410.0,310.8 L412.0,310.6 L414.0,310.5 L416.0,310.4 L418.0,310.3 L420.0,310.3 L422.0,310.3 L424.0,310.3 L426.0,310.4 L428.0,310.5 L430.0,310.6 L432.0,310.8 L434.0,311.0 L436.0,311.2 L438.0,311.5 L440.0,311.7 L442.0,312.0 L444.0,312.4 L446.0,312.7 L448.0,313.1 L450.0,313.5 L452.0,313.9 L454.0,314.3 L456.0,314.8 L458.0,315.2 L460.0,315.7 L462.0,316.1 L464.0,316.6 L466.0,317.0 L468.0,317.5 L470.0,317.9 L472.0,318.3 L474.0,318.7 L476.0,319.1 L478.0,319.5 L480.0,319.9 L482.0,320.2 L484.0,320.5 L486.0,320.8 L488.0,321.0 L490.0,321.2 L492.0,321.4 L494.0,321.6 L496.0,321.7 L498.0,321.8 L500.0,321.8 L502.0,321.8 L502.0,342.8 L500.0,342.8 L498.0,342.8 L496.0,342.7 L494.0,342.6 L492.0,342.5 L490.0,342.3 L488.0,342.1 L486.0,341.9 L484.0,341.6 L482.0,341.4 L480.0,341.1 L478.0,340.7 L476.0,340.4 L474.0,340.0 L472.0,339.6 L470.0,339.2 L468.0,338.8 L466.0,338.3 L464.0,337.9 L462.0,337.4 L460.0,337.0 L458.0,336.5 L456.0,336.1 L454.0,335.6 L452.0,335.2 L450.0,334.8 L448.0,334.4 L446.0,334.0 L444.0,333.6 L442.0,333.2 L440.0,332.9 L438.0,332.6 L436.0,332.3 L434.0,332.1 L432.0,331.9 L430.0,331.7 L428.0,331.5 L426.0,331.4 L424.0,331.3 L422.0,331.3 L420.0,331.3 L418.0,331.3 L416.0,331.4 L414.0,331.5 L412.0,331.7 L410.0,331.9 L408.0,332.1 L406.0,332.3 L404.0,332.6 L402.0,332.9 L400.0,333.2 L398.0,333.6 L396.0,334.0 L394.0,334.4 L392.0,334.8 L390.0,335.2 L388.0,335.6 L386.0,336.1 L384.0,336.5 L382.0,337.0 L380.0,337.4 L378.0,337.9 L376.0,338.3 L374.0,338.8 L372.0,339.2 L370.0,339.6 L368.0,340.0 L366.0,340.4 L364.0,340.7 L362.0,341.1 L360.0,341.4 L358.0,341.6 L356.0,341.9 L354.0,342.1 L352.0,342.3 L350.0,342.5 L348.0,342.6 L346.0,342.7 L344.0,342.8 L342.0,342.8 L340.0,342.8 Z"/><path d="M352.0,137.7 L354.0,137.7 L356.0,137.7 L358.0,137.8 L360.0,137.9 L362.0,138.0 L364.0,138.2 L366.0,138.4 L368.0,138.6 L370.0,138.9 L372.0,139.1 L374.0,139.4 L376.0,139.7 L378.0,140.0 L380.0,140.4 L382.0,140.7 L384.0,141.1 L386.0,141.5 L388.0,141.9 L390.0,142.2 L392.0,142.6 L394.0,143.0 L396.0,143.3 L398.0,143.7 L400.0,144.1 L402.0,144.4 L404.0,144.7 L406.0,145.0 L408.0,145.3 L410.0,145.5 L412.0,145.8 L414.0,146.0 L416.0,146.2 L418.0,146.3 L420.0,146.5 L422.0,146.6 L424.0,146.6 L426.0,146.7 L428.0,146.7 L430.0,146.7 L432.0,146.6 L434.0,146.6 L436.0,146.5 L438.0,146.3 L440.0,146.2 L442.0,146.0 L444.0,145.8 L446.0,145.5 L448.0,145.3 L450.0,145.0 L452.0,144.7 L454.0,144.4 L456.0,144.1 L458.0,143.7 L460.0,143.3 L462.0,143.0 L464.0,142.6 L466.0,142.2 L468.0,141.9 L470.0,141.5 L472.0,141.1 L474.0,140.7 L476.0,140.4 L478.0,140.0 L480.0,139.7 L482.0,139.4 L484.0,139.1 L486.0,138.9 L488.0,138.6 L490.0,138.4 L492.0,138.2 L494.0,138.0 L496.0,137.9 L498.0,137.8 L500.0,137.7 L502.0,137.7 L504.0,137.7 L504.0,160.7 L502.0,160.7 L500.0,160.7 L498.0,160.8 L496.0,160.9 L494.0,161.0 L492.0,161.1 L490.0,161.3 L488.0,161.5 L486.0,161.7 L484.0,162.0 L482.0,162.3 L480.0,162.5 L478.0,162.9 L476.0,163.2 L474.0,163.5 L472.0,163.9 L470.0,164.2 L468.0,164.6 L466.0,165.0 L464.0,165.4 L462.0,165.7 L460.0,166.1 L458.0,166.5 L456.0,166.8 L454.0,167.2 L452.0,167.5 L450.0,167.8 L448.0,168.1 L446.0,168.4 L444.0,168.7 L442.0,168.9 L440.0,169.1 L438.0,169.3 L436.0,169.4 L434.0,169.5 L432.0,169.6 L430.0,169.7 L428.0,169.7 L426.0,169.7 L424.0,169.6 L422.0,169.5 L420.0,169.4 L418.0,169.3 L416.0,169.1 L414.0,168.9 L412.0,168.7 L410.0,168.4 L408.0,168.1 L406.0,167.8 L404.0,167.5 L402.0,167.2 L400.0,166.8 L398.0,166.5 L396.0,166.1 L394.0,165.7 L392.0,165.4 L390.0,165.0 L388.0,164.6 L386.0,164.2 L384.0,163.9 L382.0,163.5 L380.0,163.2 L378.0,162.9 L376.0,162.5 L374.0,162.3 L372.0,162.0 L370.0,161.7 L368.0,161.5 L366.0,161.3 L364.0,161.1 L362.0,161.0 L360.0,160.9 L358.0,160.8 L356.0,160.7 L354.0,160.7 L352.0,160.7 Z"/><path d="M315.0,321.8 L317.0,321.8 L319.0,321.8 L321.0,321.9 L323.0,322.0 L325.0,322.1 L327.0,322.3 L329.0,322.5 L331.0,322.7 L333.0,323.0 L335.0,323.3 L337.0,323.6 L339.0,323.9 L341.0,324.2 L343.0,324.6 L345.0,325.0 L347.0,325.4 L349.0,325.8 L351.0,326.2 L353.0,326.6 L355.0,327.0 L357.0,327.4 L359.0,327.8 L361.0,328.2 L363.0,328.6 L365.0,329.0 L367.0,329.3 L369.0,329.7 L371.0,330.0 L373.0,330.3 L375.0,330.5 L377.0,330.7 L379.0,330.9 L381.0,331.1 L383.0,331.2 L385.0,331.3 L387.0,331.3 L389.0,331.3 L391.0,331.3 L393.0,331.2 L395.0,331.1 L397.0,330.9 L399.0,330.7 L401.0,330.5 L403.0,330.3 L405.0,330.0 L407.0,329.7 L409.0,329.3 L411.0,329.0 L413.0,328.6 L415.0,328.2 L417.0,327.8 L419.0,327.4 L421.0,327.0 L423.0,326.6 L425.0,326.2 L427.0,325.8 L429.0,325.4 L431.0,325.0 L433.0,324.6 L435.0,324.2 L437.0,323.9 L439.0,323.6 L441.0,323.3 L443.0,323.0 L445.0,322.7 L447.0,322.5 L449.0,322.3 L451.0,322.1 L453.0,322.0 L455.0,321.9 L457.0,321.8 L459.0,321.8 L461.0,321.8 L461.0,342.8 L459.0,342.8 L457.0,342.8 L455.0,342.9 L453.0,343.0 L451.0,343.2 L449.0,343.4 L447.0,343.6 L445.0,343.8 L443.0,344.1 L441.0,344.4 L439.0,344.8 L437.0,345.1 L435.0,345.5 L433.0,345.9 L431.0,346.3 L429.0,346.7 L427.0,347.1 L425.0,347.5 L423.0,347.9 L421.0,348.3 L419.0,348.7 L417.0,349.1 L415.0,349.5 L413.0,349.9 L411.0,350.2 L409.0,350.5 L407.0,350.8 L405.0,351.1 L403.0,351.4 L401.0,351.6 L399.0,351.8 L397.0,352.0 L395.0,352.1 L393.0,352.2 L391.0,352.3 L389.0,352.3 L387.0,352.3 L385.0,352.3 L383.0,352.2 L381.0,352.1 L379.0,352.0 L377.0,351.8 L375.0,351.6 L373.0,351.4 L371.0,351.1 L369.0,350.8 L367.0,350.5 L365.0,350.2 L363.0,349.9 L361.0,349.5 L359.0,349.1 L357.0,348.7 L355.0,348.3 L353.0,347.9 L351.0,347.5 L349.0,347.1 L347.0,346.7 L345.0,346.3 L343.0,345.9 L341.0,345.5 L339.0,345.1 L337.0,344.8 L335.0,344.4 L333.0,344.1 L331.0,343.8 L329.0,343.6 L327.0,343.4 L325.0,343.2 L323.0,343.0 L321.0,342.9 L319.0,342.8 L317.0,342.8 L315.0,342.8 Z"/><path d="M301.0,137.7 L303.0,137.7 L305.0,137.7 L307.0,137.6 L309.0,137.5 L311.0,137.4 L313.0,137.2 L315.0,137.1 L317.0,136.9 L319.0,136.6 L321.0,136.4 L323.0,136.1 L325.0,135.8 L327.0,135.5 L329.0,135.2 L331.0,134.8 L333.0,134.5 L335.0,134.1 L337.0,133.8 L339.0,133.4 L341.0,133.0 L343.0,132.6 L345.0,132.3 L347.0,131.9 L349.0,131.6 L351.0,131.3 L353.0,130.9 L355.0,130.6 L357.0,130.4 L359.0,130.1 L361.0,129.9 L363.0,129.7 L365.0,129.5 L367.0,129.4 L369.0,129.3 L371.0,129.2 L373.0,129.2 L375.0,129.2 L377.0,129.2 L379.0,129.3 L381.0,129.4 L383.0,129.5 L385.0,129.7 L387.0,129.9 L389.0,130.1 L391.0,130.4 L393.0,130.6 L395.0,130.9 L397.0,131.3 L399.0,131.6 L401.0,131.9 L403.0,132.3 L405.0,132.6 L407.0,133.0 L409.0,133.4 L411.0,133.8 L413.0,134.1 L415.0,134.5 L417.0,134.8 L419.0,135.2 L421.0,135.5 L423.0,135.8 L425.0,136.1 L427.0,136.4 L429.0,136.6 L431.0,136.9 L433.0,137.1 L435.0,137.2 L437.0,137.4 L439.0,137.5 L441.0,137.6 L443.0,137.7 L445.0,137.7 L447.0,137.7 L447.0,160.7 L445.0,160.7 L443.0,160.7 L441.0,160.6 L439.0,160.5 L437.0,160.4 L435.0,160.2 L433.0,160.0 L431.0,159.8 L429.0,159.5 L427.0,159.3 L425.0,159.0 L423.0,158.6 L421.0,158.3 L419.0,158.0 L417.0,157.6 L415.0,157.3 L413.0,156.9 L411.0,156.5 L409.0,156.1 L407.0,155.8 L405.0,155.4 L403.0,155.1 L401.0,154.7 L399.0,154.4 L397.0,154.1 L395.0,153.8 L393.0,153.5 L391.0,153.3 L389.0,153.0 L387.0,152.8 L385.0,152.7 L383.0,152.5 L381.0,152.4 L379.0,152.3 L377.0,152.2 L375.0,152.2 L373.0,152.2 L371.0,152.2 L369.0,152.3 L367.0,152.4 L365.0,152.5 L363.0,152.7 L361.0,152.8 L359.0,153.0 L357.0,153.3 L355.0,153.5 L353.0,153.8 L351.0,154.1 L349.0,154.4 L347.0,154.7 L345.0,155.1 L343.0,155.4 L341.0,155.8 L339.0,156.1 L337.0,156.5 L335.0,156.9 L333.0,157.3 L331.0,157.6 L329.0,158.0 L327.0,158.3 L325.0,158.6 L323.0,159.0 L321.0,159.3 L319.0,159.5 L317.0,159.8 L315.0,160.0 L313.0,160.2 L311.0,160.4 L309.0,160.5 L307.0,160.6 L305.0,160.7 L303.0,160.7 L301.0,160.7 Z"/></g></g></g>
<path d="M639.2,240.2 L645.6,240.2 L645.6,248.8" fill="none" stroke="#58d858" stroke-width="1.8"/>
<path d="M639,240.2 L642.5,237 M639,240.2 L642.5,243.4" stroke="#58d858" stroke-width="1.6"/>
<path d="M641.3,248 L650,248 L645.6,252.5 Z" fill="#58d858"/>
<path d="M123.7,438 L123.7,356.4 L128.6,352.2 L229.7,352.2 L236.1,357.9 L236.1,367 L240,370.4 L685,370.4 L685,438 Z" fill="#bcbba6"/>
<path d="M124.5,438 L124.5,356.8 L129,353 L229.4,353 L235.3,358.2 L235.3,367.3 L239.6,371.2 L685,371.2" fill="none" stroke="#e4e3d6" stroke-width="1.6"/>
<path d="M129.0,356.6 L147.6,356.6 L138.3,367.4 Z" fill="#f4f2e2" stroke="#55544a" stroke-width="1.3" stroke-linejoin="round"/>
<path d="M129.8,357.2 L146.8,357.2" stroke="#fbfaf0" stroke-width="1.2"/>
<text x="149.47" y="365.60" font-family="Liberation Sans" font-weight="bold" font-size="14.49" textLength="52.02" lengthAdjust="spacingAndGlyphs" fill="#111" >Measure</text>
<path d="M221.2,357.2 L231.2,367.2 M231.2,357.2 L221.2,367.2" stroke="#6a6958" stroke-width="2.2" transform="translate(0.8,0.8)"/>
<path d="M220.6,356.4 L230.6,366.4 M230.6,356.4 L220.6,366.4" stroke="#f8f8f0" stroke-width="2.0"/>
<text x="229.20" y="383.20" font-family="Liberation Mono" font-size="13.64" textLength="45.64" lengthAdjust="spacingAndGlyphs" fill="#26251f" style="white-space:pre" >current</text>
<rect x="229.20" y="384.80" width="45.64" height="1.3" fill="#26251f"/>
<text x="307.44" y="383.20" font-family="Liberation Mono" font-size="13.64" textLength="45.64" lengthAdjust="spacingAndGlyphs" fill="#26251f" style="white-space:pre" >minimum</text>
<rect x="307.44" y="384.80" width="45.64" height="1.3" fill="#26251f"/>
<text x="385.68" y="383.20" font-family="Liberation Mono" font-size="13.64" textLength="45.64" lengthAdjust="spacingAndGlyphs" fill="#26251f" style="white-space:pre" >maximum</text>
<rect x="385.68" y="384.80" width="45.64" height="1.3" fill="#26251f"/>
<text x="463.92" y="383.20" font-family="Liberation Mono" font-size="13.64" textLength="65.20" lengthAdjust="spacingAndGlyphs" fill="#26251f" style="white-space:pre" >total meas</text>
<rect x="463.92" y="384.80" width="65.20" height="1.3" fill="#26251f"/>
<text x="131.28" y="396.60" font-family="Liberation Mono" font-size="13.64" textLength="86.45" lengthAdjust="spacingAndGlyphs" fill="#26251f" style="white-space:pre">Jitter RMS(<tspan fill="#3fcf3f" font-weight="bold">2</tspan>)</text>
<text x="229.20" y="396.60" font-family="Liberation Mono" font-size="13.64" textLength="39.12" lengthAdjust="spacingAndGlyphs" fill="#4a4ad6" style="white-space:pre" >528 fs</text>
<text x="307.44" y="396.60" font-family="Liberation Mono" font-size="13.64" textLength="39.12" lengthAdjust="spacingAndGlyphs" fill="#4a4ad6" style="white-space:pre" >521 fs</text>
<text x="385.68" y="396.60" font-family="Liberation Mono" font-size="13.64" textLength="39.12" lengthAdjust="spacingAndGlyphs" fill="#4a4ad6" style="white-space:pre" >539 fs</text>
<text x="463.92" y="396.60" font-family="Liberation Mono" font-size="13.64" textLength="13.04" lengthAdjust="spacingAndGlyphs" fill="#4a4ad6" style="white-space:pre" >52</text>
<text x="137.93" y="409.60" font-family="Liberation Mono" font-size="13.64" textLength="79.80" lengthAdjust="spacingAndGlyphs" fill="#26251f" style="white-space:pre">Rise time(<tspan fill="#3fcf3f" font-weight="bold">2</tspan>)</text>
<text x="229.20" y="409.60" font-family="Liberation Mono" font-size="13.64" textLength="52.16" lengthAdjust="spacingAndGlyphs" fill="#4a4ad6" style="white-space:pre" >14.93 ps</text>
<text x="307.44" y="409.60" font-family="Liberation Mono" font-size="13.64" textLength="52.16" lengthAdjust="spacingAndGlyphs" fill="#4a4ad6" style="white-space:pre" >14.65 ps</text>
<text x="385.68" y="409.60" font-family="Liberation Mono" font-size="13.64" textLength="52.16" lengthAdjust="spacingAndGlyphs" fill="#4a4ad6" style="white-space:pre" >14.93 ps</text>
<text x="463.92" y="409.60" font-family="Liberation Mono" font-size="13.64" textLength="13.04" lengthAdjust="spacingAndGlyphs" fill="#4a4ad6" style="white-space:pre" >52</text>
<text x="137.93" y="422.50" font-family="Liberation Mono" font-size="13.64" textLength="79.80" lengthAdjust="spacingAndGlyphs" fill="#26251f" style="white-space:pre">Fall time(<tspan fill="#3fcf3f" font-weight="bold">2</tspan>)</text>
<text x="229.20" y="422.50" font-family="Liberation Mono" font-size="13.64" textLength="52.16" lengthAdjust="spacingAndGlyphs" fill="#4a4ad6" style="white-space:pre" >14.79 ps</text>
<text x="307.44" y="422.50" font-family="Liberation Mono" font-size="13.64" textLength="52.16" lengthAdjust="spacingAndGlyphs" fill="#4a4ad6" style="white-space:pre" >14.79 ps</text>
<text x="385.68" y="422.50" font-family="Liberation Mono" font-size="13.64" textLength="52.16" lengthAdjust="spacingAndGlyphs" fill="#4a4ad6" style="white-space:pre" >14.93 ps</text>
<text x="463.92" y="422.50" font-family="Liberation Mono" font-size="13.64" textLength="13.04" lengthAdjust="spacingAndGlyphs" fill="#4a4ad6" style="white-space:pre" >52</text>
<text x="151.23" y="435.50" font-family="Liberation Mono" font-size="13.64" textLength="66.50" lengthAdjust="spacingAndGlyphs" fill="#26251f" style="white-space:pre">Eye Amp(<tspan fill="#3fcf3f" font-weight="bold">2</tspan>)</text>
<text x="229.20" y="435.50" font-family="Liberation Mono" font-size="13.64" textLength="39.12" lengthAdjust="spacingAndGlyphs" fill="#4a4ad6" style="white-space:pre" >410 mV</text>
<text x="307.44" y="435.50" font-family="Liberation Mono" font-size="13.64" textLength="39.12" lengthAdjust="spacingAndGlyphs" fill="#4a4ad6" style="white-space:pre" >409 mV</text>
<text x="385.68" y="435.50" font-family="Liberation Mono" font-size="13.64" textLength="39.12" lengthAdjust="spacingAndGlyphs" fill="#4a4ad6" style="white-space:pre" >410 mV</text>
<text x="463.92" y="435.50" font-family="Liberation Mono" font-size="13.64" textLength="13.04" lengthAdjust="spacingAndGlyphs" fill="#4a4ad6" style="white-space:pre" >52</text>
<rect x="678.50" y="371.50" width="6.80" height="66.70" fill="url(#gMpR)" />
<rect x="124.50" y="434.50" width="560.80" height="3.80" fill="url(#gMpB)" />
<path d="M685.3,436 L685.3,438.3 L683,438.3 Z" fill="#efeee3"/>
<path d="M686.6,371 L686.6,437 Q686.6,440.3 683.3,440.3 L123,440.3" fill="none" stroke="#efeee3" stroke-width="2.6"/>
<rect x="618.20" y="390.90" width="54.00" height="30.80" rx="2.5" fill="#3e3d33" opacity="0.8" filter="url(#fSh)"/>
<rect x="616.70" y="388.40" width="54.00" height="30.80" rx="2.5" fill="url(#gIcoV)"/>
<rect x="616.7" y="388.4" width="54" height="30.8" rx="2.5" fill="url(#gIcoH)"/>
<text x="625.17" y="400.60" font-family="Liberation Sans" font-weight="normal" font-size="13.04" textLength="30.64" lengthAdjust="spacingAndGlyphs" fill="#1e1e1a" >Setup</text>
<text x="625.27" y="414.00" font-family="Liberation Sans" font-weight="normal" font-size="13.04" textLength="32.47" lengthAdjust="spacingAndGlyphs" fill="#1e1e1a" style="white-space:pre">&amp; Info</text>
<path d="M2,36 L108,36 Q114.5,36 114.5,42.5 Q114.5,49 108,49 L2,49 Z" fill="url(#gMode)"/>
<text x="16.03" y="47.10" font-family="Liberation Sans" font-weight="normal" font-size="13.04" textLength="86.50" lengthAdjust="spacingAndGlyphs" fill="#2a2a1e" >Eye/Mask Mode</text>
<path d="M8.5,50.2 L111,50.2 L113.6,52.8 L113.6,121.4 C113.6,127 108,128.5 100,130 L91,131.8 C88.5,132.3 87.8,133 87.8,135 L87.8,448.6 L8.5,448.6 Z" fill="#bab8a3"/>
<path d="M9.3,448 L9.3,51 L111,51" fill="none" stroke="#e6e5d8" stroke-width="1.6"/>
<path d="M112.9,52.6 L112.9,121.4 C112.9,126.5 107.5,128 100,129.6 L91,131.4 C88.8,131.9 87.4,132.6 87.4,135" fill="none" stroke="#4e4d42" stroke-width="1.4"/>
<path d="M87.4,226 L87.4,448.6 L8.5,448.6" fill="none" stroke="#4a493f" stroke-width="1.5"/>
<rect x="79.00" y="227.00" width="8.40" height="221.60" fill="url(#gPanR)" />
<path d="M88.3,135.6 L110.2,135.6 L113.8,139.2 L113.8,211 C113.8,215 112,217 106,219.5 L88.3,226.6 Z" fill="#c4c3ae"/>
<path d="M89,226 L89,136.4 L110,136.4" fill="none" stroke="#e2e1d3" stroke-width="1.2"/>
<path d="M113.2,139 L113.2,211 C113.2,214.5 111.5,216.5 106,218.9 L88.6,226" fill="none" stroke="#4e4d42" stroke-width="1.3"/>
<path d="M87.4,134 L87.4,227" fill="none" stroke="#4a493f" stroke-width="1.5"/>
<g transform="translate(95.20,54.40) rotate(90)"><text x="-0.99" y="0.00" font-family="Liberation Sans" font-weight="bold" font-size="13.91" textLength="69.17" lengthAdjust="spacingAndGlyphs" fill="#121210" >Eye Meas</text></g>
<g transform="translate(93.00,146.40) rotate(90)"><text x="-1.20" y="0.00" font-family="Liberation Sans" font-weight="normal" font-size="13.91" textLength="58.90" lengthAdjust="spacingAndGlyphs" fill="#1c1c18" >Msk Test</text></g>
<rect x="19.5" y="64.5" width="54.0" height="37.0" rx="3" fill="#3e3d33" opacity="0.8" filter="url(#fSh)"/>
<rect x="18.0" y="62.0" width="54.0" height="37.0" rx="3" fill="url(#gIcoV)"/>
<rect x="18.0" y="62.0" width="54.0" height="37.0" rx="3" fill="url(#gIcoH)"/>
<rect x="19.5" y="134.7" width="54.0" height="37.8" rx="3" fill="#3e3d33" opacity="0.8" filter="url(#fSh)"/>
<rect x="18.0" y="132.2" width="54.0" height="37.8" rx="3" fill="url(#gIcoV)"/>
<rect x="18.0" y="132.2" width="54.0" height="37.8" rx="3" fill="url(#gIcoH)"/>
<rect x="19.5" y="204.4" width="54.0" height="39.1" rx="3" fill="#3e3d33" opacity="0.8" filter="url(#fSh)"/>
<rect x="18.0" y="201.9" width="54.0" height="39.1" rx="3" fill="url(#gIcoV)"/>
<rect x="18.0" y="201.9" width="54.0" height="39.1" rx="3" fill="url(#gIcoH)"/>
<rect x="19.5" y="274.4" width="54.0" height="38.5" rx="3" fill="#3e3d33" opacity="0.8" filter="url(#fSh)"/>
<rect x="18.0" y="271.9" width="54.0" height="38.5" rx="3" fill="url(#gIcoV)"/>
<rect x="18.0" y="271.9" width="54.0" height="38.5" rx="3" fill="url(#gIcoH)"/>
<rect x="19.5" y="343.9" width="54.0" height="36.6" rx="3" fill="#3e3d33" opacity="0.8" filter="url(#fSh)"/>
<rect x="18.0" y="341.4" width="54.0" height="36.6" rx="3" fill="url(#gIcoV)"/>
<rect x="18.0" y="341.4" width="54.0" height="36.6" rx="3" fill="url(#gIcoH)"/>
<path d="M25.7,72.9 L63.4,72.9 M25.7,89.6 L63.4,89.6" stroke="#3a5cc0" stroke-width="2.4"/>
<path d="M27.0,72.9 L40.6,89.6 M27.0,89.6 L40.6,72.9" stroke="#3a5cc0" stroke-width="2.0" fill="none"/>
<path d="M48.6,72.9 L62.2,89.6 M48.6,89.6 L62.2,72.9" stroke="#3a5cc0" stroke-width="2.0" fill="none"/>
<path d="M41.0,81.9 L48.5,81.9" stroke="#111" stroke-width="1.9"/>
<path d="M37.7,81.9 L41.5,78.5 L41.5,85.3 Z M51.8,81.9 L48.0,78.5 L48.0,85.3 Z" fill="#111"/>
<path d="M31.7,143.7 L62.6,143.7 M31.7,157.4 L62.6,157.4" stroke="#3a5cc0" stroke-width="2.4"/>
<path d="M33.5,143.7 L44.0,157.4 M33.5,157.4 L44.0,143.7" stroke="#3a5cc0" stroke-width="2.0" fill="none"/>
<path d="M50.5,143.7 L61.0,157.4 M50.5,157.4 L61.0,143.7" stroke="#3a5cc0" stroke-width="2.0" fill="none"/>
<path d="M24,143.4 L31,143.4 M24,157.8 L31,157.8" stroke="#7a7a70" stroke-width="1" stroke-dasharray="1 1"/>
<path d="M27.9,148.3 L27.9,152.7" stroke="#111" stroke-width="1.9"/>
<path d="M27.9,145.0 L24.5,148.8 L31.3,148.8 Z" fill="#111"/>
<path d="M27.9,156.0 L24.5,152.2 L31.3,152.2 Z" fill="#111"/>
<path d="M46.3,149.5 L46.3,152.3" stroke="#111" stroke-width="1.9"/>
<path d="M46.3,155.0 L43.5,151.8 L49.1,151.8 Z" fill="#111"/>
<path d="M46.3,162.1 L46.3,165.0" stroke="#111" stroke-width="1.9"/>
<path d="M46.3,159.4 L43.5,162.6 L49.1,162.6 Z" fill="#111"/>
<path d="M32.6,211.6 L58.3,211.6 M32.6,231.3 L58.3,231.3" stroke="#3a5cc0" stroke-width="2.4"/>
<path d="M40.7,211.6 L57.0,231.3 M49.3,211.6 L34.7,231.3" stroke="#3a5cc0" stroke-width="1.8"/>
<path d="M33.4,222.5 L58.3,222.5" stroke="#707068" stroke-width="1" stroke-dasharray="1.2 1.3"/>
<path d="M43.5,235.6 L48.1,235.6" stroke="#111" stroke-width="1.9"/>
<path d="M41.0,235.6 L44.0,233.0 L44.0,238.2 Z M50.6,235.6 L47.6,233.0 L47.6,238.2 Z" fill="#111"/>
<path d="M25.7,281.3 L63.4,281.3 M25.7,297.7 L63.4,297.7" stroke="#3a5cc0" stroke-width="2.4"/>
<path d="M27.0,281.3 L40.6,297.7 M27.0,297.7 L40.6,281.3" stroke="#3a5cc0" stroke-width="2.0" fill="none"/>
<path d="M48.6,281.3 L62.2,297.7 M48.6,297.7 L62.2,281.3" stroke="#3a5cc0" stroke-width="2.0" fill="none"/>
<path d="M33.4,278 L33.4,301 M55.6,278 L55.6,301" stroke="#5a5a52" stroke-width="0.8"/>
<path d="M36.7,302.0 L52.1,302.0" stroke="#111" stroke-width="1.9"/>
<path d="M33.8,302.0 L37.2,299.2 L37.2,304.8 Z M55.0,302.0 L51.6,299.2 L51.6,304.8 Z" fill="#111"/>
<path d="M25.7,350.8 L63.4,350.8 M25.7,364.6 L63.4,364.6" stroke="#3a5cc0" stroke-width="2.6"/>
<path d="M24.5,350.8 L64.5,350.8 M24.5,364.6 L64.5,364.6" stroke="#b8c860" stroke-width="1" stroke-dasharray="1 1.8"/>
<path d="M27.0,350.8 L40.6,364.6 M27.0,364.6 L40.6,350.8" stroke="#3a5cc0" stroke-width="2.0" fill="none"/>
<path d="M48.6,350.8 L62.2,364.6 M48.6,364.6 L62.2,350.8" stroke="#3a5cc0" stroke-width="2.0" fill="none"/>
<path d="M45.5,354.9 L45.5,360.6" stroke="#111" stroke-width="1.9"/>
<path d="M45.5,352.0 L42.5,355.4 L48.5,355.4 Z" fill="#111"/>
<path d="M45.5,363.5 L42.5,360.1 L48.5,360.1 Z" fill="#111"/>
<text x="18.77" y="113.60" font-family="Liberation Sans" font-weight="normal" font-size="12.46" textLength="53.01" lengthAdjust="spacingAndGlyphs" fill="#26261f" >Eye Width</text>
<text x="30.39" y="183.30" font-family="Liberation Sans" font-weight="normal" font-size="12.46" textLength="31.24" lengthAdjust="spacingAndGlyphs" fill="#26261f" >Signal</text>
<text x="24.67" y="197.00" font-family="Liberation Sans" font-weight="normal" font-size="12.46" textLength="44.45" lengthAdjust="spacingAndGlyphs" fill="#26261f" >To Noise</text>
<text x="19.30" y="253.30" font-family="Liberation Sans" font-weight="normal" font-size="12.46" textLength="54.09" lengthAdjust="spacingAndGlyphs" fill="#26261f" >Duty Cycle</text>
<text x="22.18" y="267.00" font-family="Liberation Sans" font-weight="normal" font-size="12.46" textLength="48.55" lengthAdjust="spacingAndGlyphs" fill="#26261f" >Distortion</text>
<text x="25.70" y="322.40" font-family="Liberation Sans" font-weight="normal" font-size="12.46" textLength="39.93" lengthAdjust="spacingAndGlyphs" fill="#26261f" >Bit Rate</text>
<text x="36.61" y="392.30" font-family="Liberation Sans" font-weight="normal" font-size="12.46" textLength="19.12" lengthAdjust="spacingAndGlyphs" fill="#26261f" >Eye</text>
<text x="21.60" y="406.00" font-family="Liberation Sans" font-weight="normal" font-size="12.46" textLength="49.83" lengthAdjust="spacingAndGlyphs" fill="#26261f" >Amplitude</text>
<rect x="12.5" y="412.7" width="70.5" height="34.1" fill="#c9c8b4"/>
<path d="M12.5,446.3 L12.5,413.2 L82.5,413.2" fill="none" stroke="#f0efe4" stroke-width="1.2"/>
<path d="M13.5,445.6 L81.8,445.6 L81.8,414" fill="none" stroke="#8a897a" stroke-width="1.2"/>
<path d="M12.5,446.6 L82.8,446.6 L82.8,412.7" fill="none" stroke="#1a1a16" stroke-width="1.2"/>
<text x="30.97" y="426.60" font-family="Liberation Sans" font-weight="bold" font-size="11.88" textLength="30.36" lengthAdjust="spacingAndGlyphs" fill="#111" >More</text>
<text x="22.68" y="441.00" font-family="Liberation Sans" font-weight="bold" font-size="11.88" textLength="47.31" lengthAdjust="spacingAndGlyphs" fill="#111" style="white-space:pre">(3 of 3)</text>
<text x="567.92" y="464.40" font-family="Liberation Sans" font-weight="normal" font-size="13.48" textLength="67.46" lengthAdjust="spacingAndGlyphs" fill="#1c1c18" >02 Nov 2016</text>
<text x="644.28" y="464.40" font-family="Liberation Sans" font-weight="normal" font-size="13.48" textLength="30.60" lengthAdjust="spacingAndGlyphs" fill="#1c1c18" >15:59</text>
<rect x="6.3" y="487.5" width="95.2" height="30.0" rx="4" fill="#4d4c40" opacity="0.8" filter="url(#fSh)"/>
<rect x="4.3" y="485.1" width="95.2" height="30.0" rx="3.5" fill="url(#gSt)"/>
<rect x="6.3" y="485.9" width="90.2" height="2" rx="1" fill="#ecebe2" opacity="0.7"/>
<rect x="108.3" y="487.5" width="91.2" height="30.0" rx="4" fill="#4d4c40" opacity="0.8" filter="url(#fSh)"/>
<rect x="106.3" y="485.1" width="91.2" height="30.0" rx="3.5" fill="url(#gSt)"/>
<rect x="108.3" y="485.9" width="86.2" height="2" rx="1" fill="#ecebe2" opacity="0.7"/>
<rect x="206.0" y="487.5" width="191.5" height="30.0" rx="4" fill="#4d4c40" opacity="0.8" filter="url(#fSh)"/>
<rect x="204.0" y="485.1" width="191.5" height="30.0" rx="3.5" fill="url(#gTb)"/>
<rect x="206.0" y="485.9" width="186.5" height="2" rx="1" fill="#ecebe2" opacity="0.7"/>
<rect x="412.5" y="487.5" width="101.6" height="30.0" rx="4" fill="#4d4c40" opacity="0.8" filter="url(#fSh)"/>
<rect x="410.5" y="485.1" width="101.6" height="30.0" rx="3.5" fill="url(#gSt)"/>
<rect x="412.5" y="485.9" width="96.6" height="2" rx="1" fill="#ecebe2" opacity="0.7"/>
<rect x="520.7" y="487.5" width="84.8" height="30.0" rx="4" fill="#4d4c40" opacity="0.8" filter="url(#fSh)"/>
<rect x="518.7" y="485.1" width="84.8" height="30.0" rx="3.5" fill="url(#gSt)"/>
<rect x="520.7" y="485.9" width="79.8" height="2" rx="1" fill="#ecebe2" opacity="0.7"/>
<rect x="616.0" y="487.5" width="71.5" height="30.0" rx="4" fill="#4d4c40" opacity="0.8" filter="url(#fSh)"/>
<rect x="614.0" y="485.1" width="71.5" height="30.0" rx="3.5" fill="url(#gSt)"/>
<rect x="616.0" y="485.9" width="66.5" height="2" rx="1" fill="#ecebe2" opacity="0.7"/>
<ellipse cx="16.6" cy="500.9" rx="7.3" ry="10" fill="#1e1e18" opacity="0.8" transform="translate(1.2,1.6)"/>
<ellipse cx="16.6" cy="500.9" rx="7.2" ry="9.8" fill="url(#gE1)"/>
<text x="12.96" y="505.50" font-family="Liberation Sans" font-weight="normal" font-size="13.91" textLength="7.74" lengthAdjust="spacingAndGlyphs" fill="#222" >1</text>
<ellipse cx="116.9" cy="500.9" rx="7.3" ry="10" fill="#1e1e18" opacity="0.8" transform="translate(1.2,1.6)"/>
<ellipse cx="116.9" cy="500.9" rx="7.2" ry="9.8" fill="url(#gE2)"/>
<text x="113.60" y="505.50" font-family="Liberation Sans" font-weight="normal" font-size="13.91" textLength="7.74" lengthAdjust="spacingAndGlyphs" fill="#0f3a0f" >2</text>
<ellipse cx="215.3" cy="501.2" rx="7.3" ry="10" fill="#1e1e18" opacity="0.8" transform="translate(1.2,1.6)"/>
<ellipse cx="215.3" cy="501.2" rx="7.2" ry="9.8" fill="url(#gE3)"/>
<text x="212.14" y="505.80" font-family="Liberation Sans" font-weight="normal" font-size="13.91" textLength="7.74" lengthAdjust="spacingAndGlyphs" fill="#10224a" >3</text>
<ellipse cx="234.9" cy="501.2" rx="7.3" ry="10" fill="#1e1e18" opacity="0.8" transform="translate(1.2,1.6)"/>
<ellipse cx="234.9" cy="501.2" rx="7.2" ry="9.8" fill="url(#gE4)"/>
<text x="232.02" y="505.80" font-family="Liberation Sans" font-weight="normal" font-size="13.91" textLength="7.74" lengthAdjust="spacingAndGlyphs" fill="#4a0a14" >4</text>
<text x="27.97" y="499.40" font-family="Liberation Sans" font-weight="normal" font-size="13.62" textLength="62.96" lengthAdjust="spacingAndGlyphs" fill="#3434c4" >252 µW/div</text>
<text x="28.11" y="512.90" font-family="Liberation Sans" font-weight="normal" font-size="13.62" textLength="52.55" lengthAdjust="spacingAndGlyphs" fill="#3434c4" >513.5 µW</text>
<text x="128.86" y="499.40" font-family="Liberation Sans" font-weight="normal" font-size="13.62" textLength="63.20" lengthAdjust="spacingAndGlyphs" fill="#3434c4" >96.2 mV/div</text>
<text x="128.86" y="512.90" font-family="Liberation Sans" font-weight="normal" font-size="13.62" textLength="42.11" lengthAdjust="spacingAndGlyphs" fill="#3434c4" >-7.2 mV</text>
<text x="251.37" y="498.90" font-family="Liberation Sans" font-weight="normal" font-size="13.62" textLength="111.13" lengthAdjust="spacingAndGlyphs" fill="#1e1e1a" >Precision Timebase...</text>
<text x="251.39" y="512.50" font-family="Liberation Sans" font-weight="normal" font-size="13.62" textLength="55.34" lengthAdjust="spacingAndGlyphs" fill="#1e1e1a" >Reference:</text>
<text x="310.43" y="512.50" font-family="Liberation Sans" font-weight="normal" font-size="13.62" textLength="73.53" lengthAdjust="spacingAndGlyphs" fill="#3434c4" >6.445313 GHz</text>
<text x="414.19" y="498.50" font-family="Liberation Sans" font-weight="normal" font-size="13.33" textLength="26.10" lengthAdjust="spacingAndGlyphs" fill="#1e1e1a" >Time:</text>
<text x="440.39" y="498.50" font-family="Liberation Sans" font-weight="normal" font-size="13.33" textLength="52.07" lengthAdjust="spacingAndGlyphs" fill="#3434c4" >6.4 ps/div</text>
<text x="412.67" y="512.20" font-family="Liberation Sans" font-weight="normal" font-size="13.33" textLength="32.82" lengthAdjust="spacingAndGlyphs" fill="#1e1e1a" >Delay:</text>
<text x="445.22" y="512.20" font-family="Liberation Sans" font-weight="normal" font-size="13.33" textLength="57.88" lengthAdjust="spacingAndGlyphs" fill="#3434c4" >24.0614 ns</text>
<text x="526.57" y="499.30" font-family="Liberation Sans" font-weight="normal" font-size="13.33" textLength="22.81" lengthAdjust="spacingAndGlyphs" fill="#1e1e1a" >Trig:</text>
<text x="550.85" y="499.30" font-family="Liberation Sans" font-weight="normal" font-size="13.33" textLength="49.26" lengthAdjust="spacingAndGlyphs" fill="#3434c4" >Free Run</text>
<rect x="549.60" y="507.00" width="4.20" height="1.60" fill="#3434c4" />
<rect x="555.60" y="507.00" width="4.20" height="1.60" fill="#3434c4" />
<rect x="561.50" y="507.00" width="4.20" height="1.60" fill="#3434c4" />
<text x="637.85" y="500.10" font-family="Liberation Sans" font-weight="normal" font-size="13.33" textLength="38.21" lengthAdjust="spacingAndGlyphs" fill="#9b9a89" >Pattern</text>
<text x="637.81" y="510.40" font-family="Liberation Sans" font-weight="normal" font-size="13.33" textLength="26.01" lengthAdjust="spacingAndGlyphs" fill="#9b9a89" >Lock</text>
<path d="M623.6,499.6 L623.6,495.6 A4.6,4.4 0 0 1 632.8,495.6 L632.8,497.2" fill="none" stroke="#8a897a" stroke-width="2"/>
<rect x="621.4" y="499.6" width="12.6" height="9.9" fill="url(#gLk)"/>
<rect x="626.9" y="502.6" width="1.8" height="3.6" fill="#4a4a40"/></g></svg></div></body></html>
